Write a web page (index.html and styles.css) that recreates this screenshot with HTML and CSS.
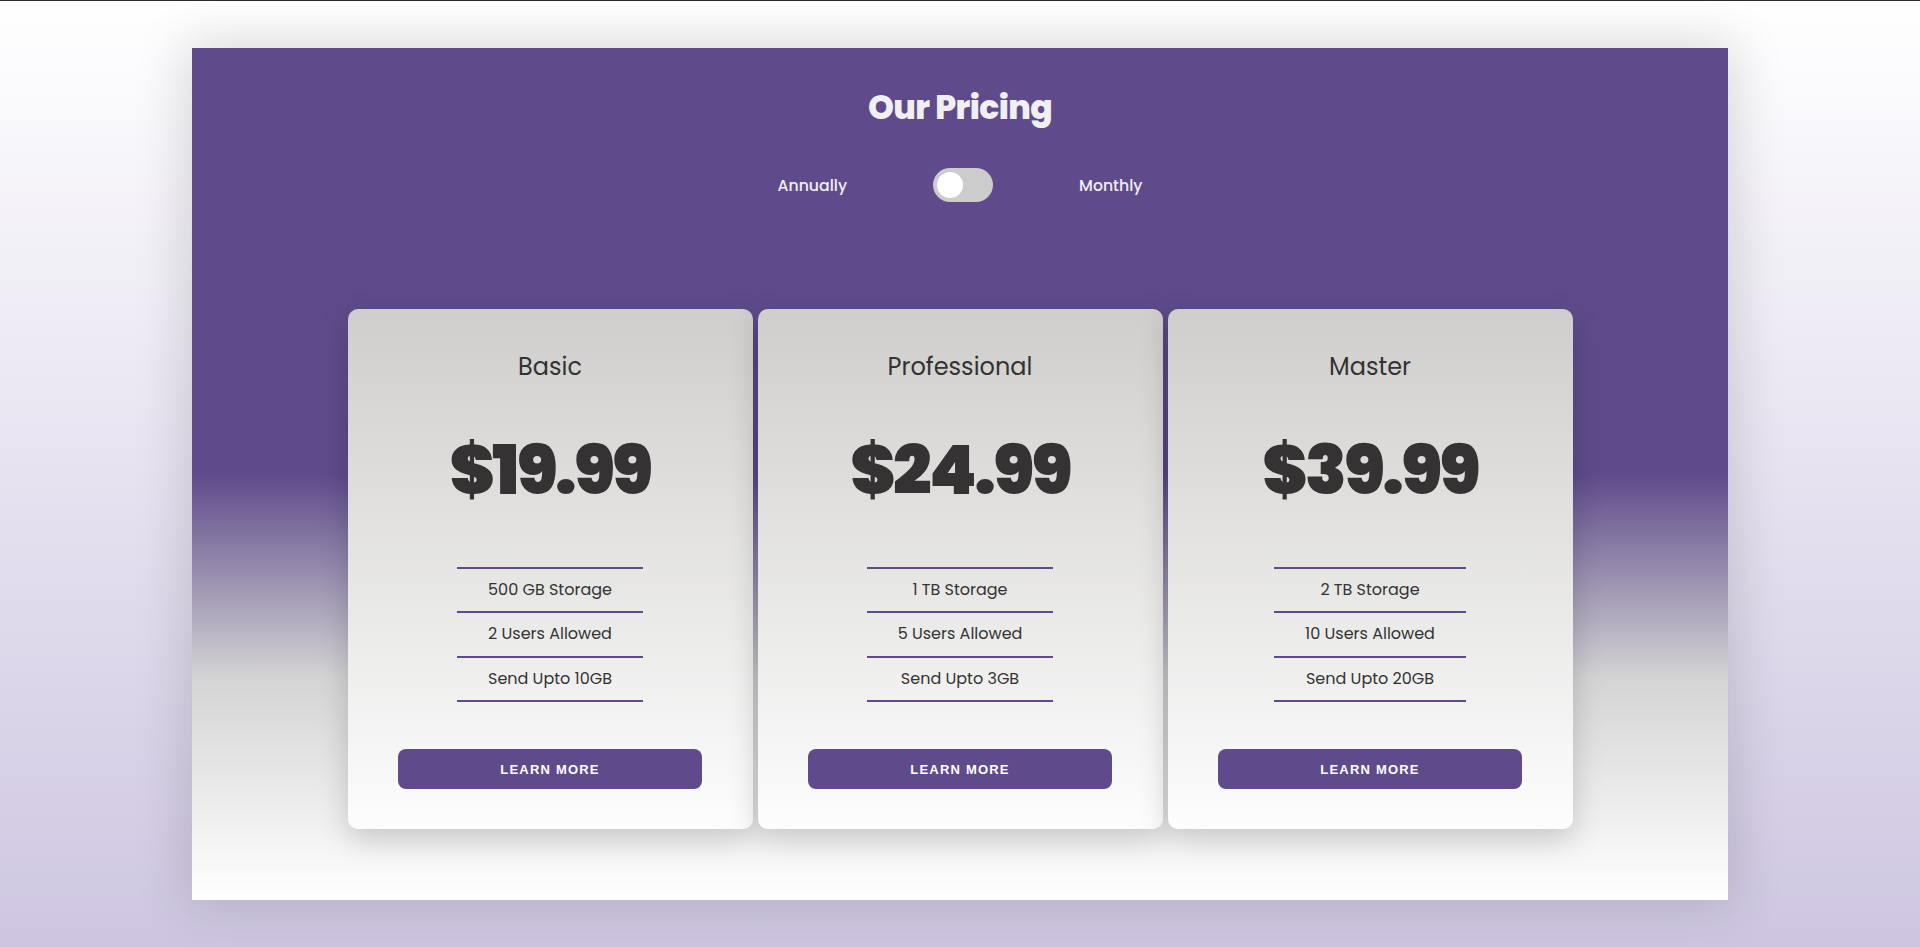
FILE: index.html
```html
<!DOCTYPE html>
<html lang="en">
<head>
<meta charset="utf-8">
<title>Our Pricing</title>
<link rel="stylesheet" href="styles.css">
</head>
<body>
  <main class="pricing">
    <h1 class="pricing-title">Our Pricing</h1>
    <div class="billing-toggle">
      <span class="billing-label">Annually</span>
      <span class="switch"><span class="switch-knob"></span></span>
      <span class="billing-label">Monthly</span>
    </div>
    <div class="plans">
      <section class="plan">
        <h2 class="plan-name">Basic</h2>
        <p class="plan-price">$19.99</p>
        <ul class="plan-features">
          <li>500 GB Storage</li>
          <li>2 Users Allowed</li>
          <li>Send Upto 10GB</li>
        </ul>
        <button class="plan-button">Learn More</button>
      </section>
      <section class="plan">
        <h2 class="plan-name">Professional</h2>
        <p class="plan-price">$24.99</p>
        <ul class="plan-features">
          <li>1 TB Storage</li>
          <li>5 Users Allowed</li>
          <li>Send Upto 3GB</li>
        </ul>
        <button class="plan-button">Learn More</button>
      </section>
      <section class="plan">
        <h2 class="plan-name">Master</h2>
        <p class="plan-price">$39.99</p>
        <ul class="plan-features">
          <li>2 TB Storage</li>
          <li>10 Users Allowed</li>
          <li>Send Upto 20GB</li>
        </ul>
        <button class="plan-button">Learn More</button>
      </section>
    </div>
  </main>
</body>
</html>
```
FILE: styles.css
```css
* {
  box-sizing: border-box;
}

html {
  height: 100%;
}

body {
  margin: 0;
  min-height: 100%;
  border-top: 1px solid #2a2a2a;
  padding-top: 47px;
  background: linear-gradient(to bottom, #ffffff 0%, #cec6e1 100%);
  font-family: "Poppins", Inter, "Noto Sans", sans-serif;
  color: #333333;
  overflow: hidden;
}

.pricing {
  width: 1536px;
  height: 852px;
  margin: 0 auto;
  padding-top: 40px;
  background: linear-gradient(to bottom, #5f4b8b 0%, #5f4b8b 50%, #d4d4d4 74%, #ffffff 100%);
  box-shadow: 0 0 50px 6px rgba(0, 0, 0, 0.14);
  display: flex;
  flex-direction: column;
  align-items: center;
}

.pricing-title {
  margin: 0;
  font-size: 33px;
  line-height: 40px;
  font-weight: 800;
  letter-spacing: -0.6px;
  color: #f0f0f2;
}

.billing-toggle {
  margin-top: 40px;
  display: flex;
  align-items: center;
  gap: 86px;
}

.billing-label {
  font-size: 15.7px;
  font-weight: 500;
  color: #f0f0f2;
}

.switch {
  width: 60px;
  height: 34px;
  border-radius: 34px;
  background: #cccccc;
  display: flex;
  align-items: center;
  padding: 0 4px;
}

.switch-knob {
  width: 26px;
  height: 26px;
  border-radius: 50%;
  background: #ffffff;
}

.plans {
  margin-top: 107px;
  display: flex;
  justify-content: center;
  gap: 5px;
}

.plan {
  width: 405px;
  height: 520px;
  padding-top: 42px;
  border-radius: 10px;
  background: linear-gradient(to bottom, #cfcecc 0%, #fdfdfd 100%);
  box-shadow: 0 10px 30px rgba(0, 0, 0, 0.18);
  display: flex;
  flex-direction: column;
  align-items: center;
}

.plan-name {
  margin: 0;
  font-size: 24px;
  line-height: 32px;
  font-weight: 400;
  color: #333333;
}

.plan-price {
  margin: 48px 0 0;
  font-size: 68px;
  line-height: 80px;
  font-weight: 900;
  letter-spacing: -2.5px;
  color: #343233;
}

.plan-features {
  margin: 56px 0 0;
  padding: 0;
  list-style: none;
  border-top: 2px solid #5f4b8b;
}

.plan-features li {
  padding: 0 31px;
  font-size: 16px;
  line-height: 42.4px;
  text-align: center;
  border-bottom: 2px solid #5f4b8b;
  color: #333333;
}

.plan-button {
  margin-top: 47px;
  width: 304px;
  height: 40px;
  border: none;
  border-radius: 8px;
  background: #5f4b8b;
  color: #ffffff;
  font-family: "Liberation Sans", Arial, sans-serif;
  font-size: 13px;
  font-weight: 700;
  letter-spacing: 1.2px;
  text-transform: uppercase;
}
```
